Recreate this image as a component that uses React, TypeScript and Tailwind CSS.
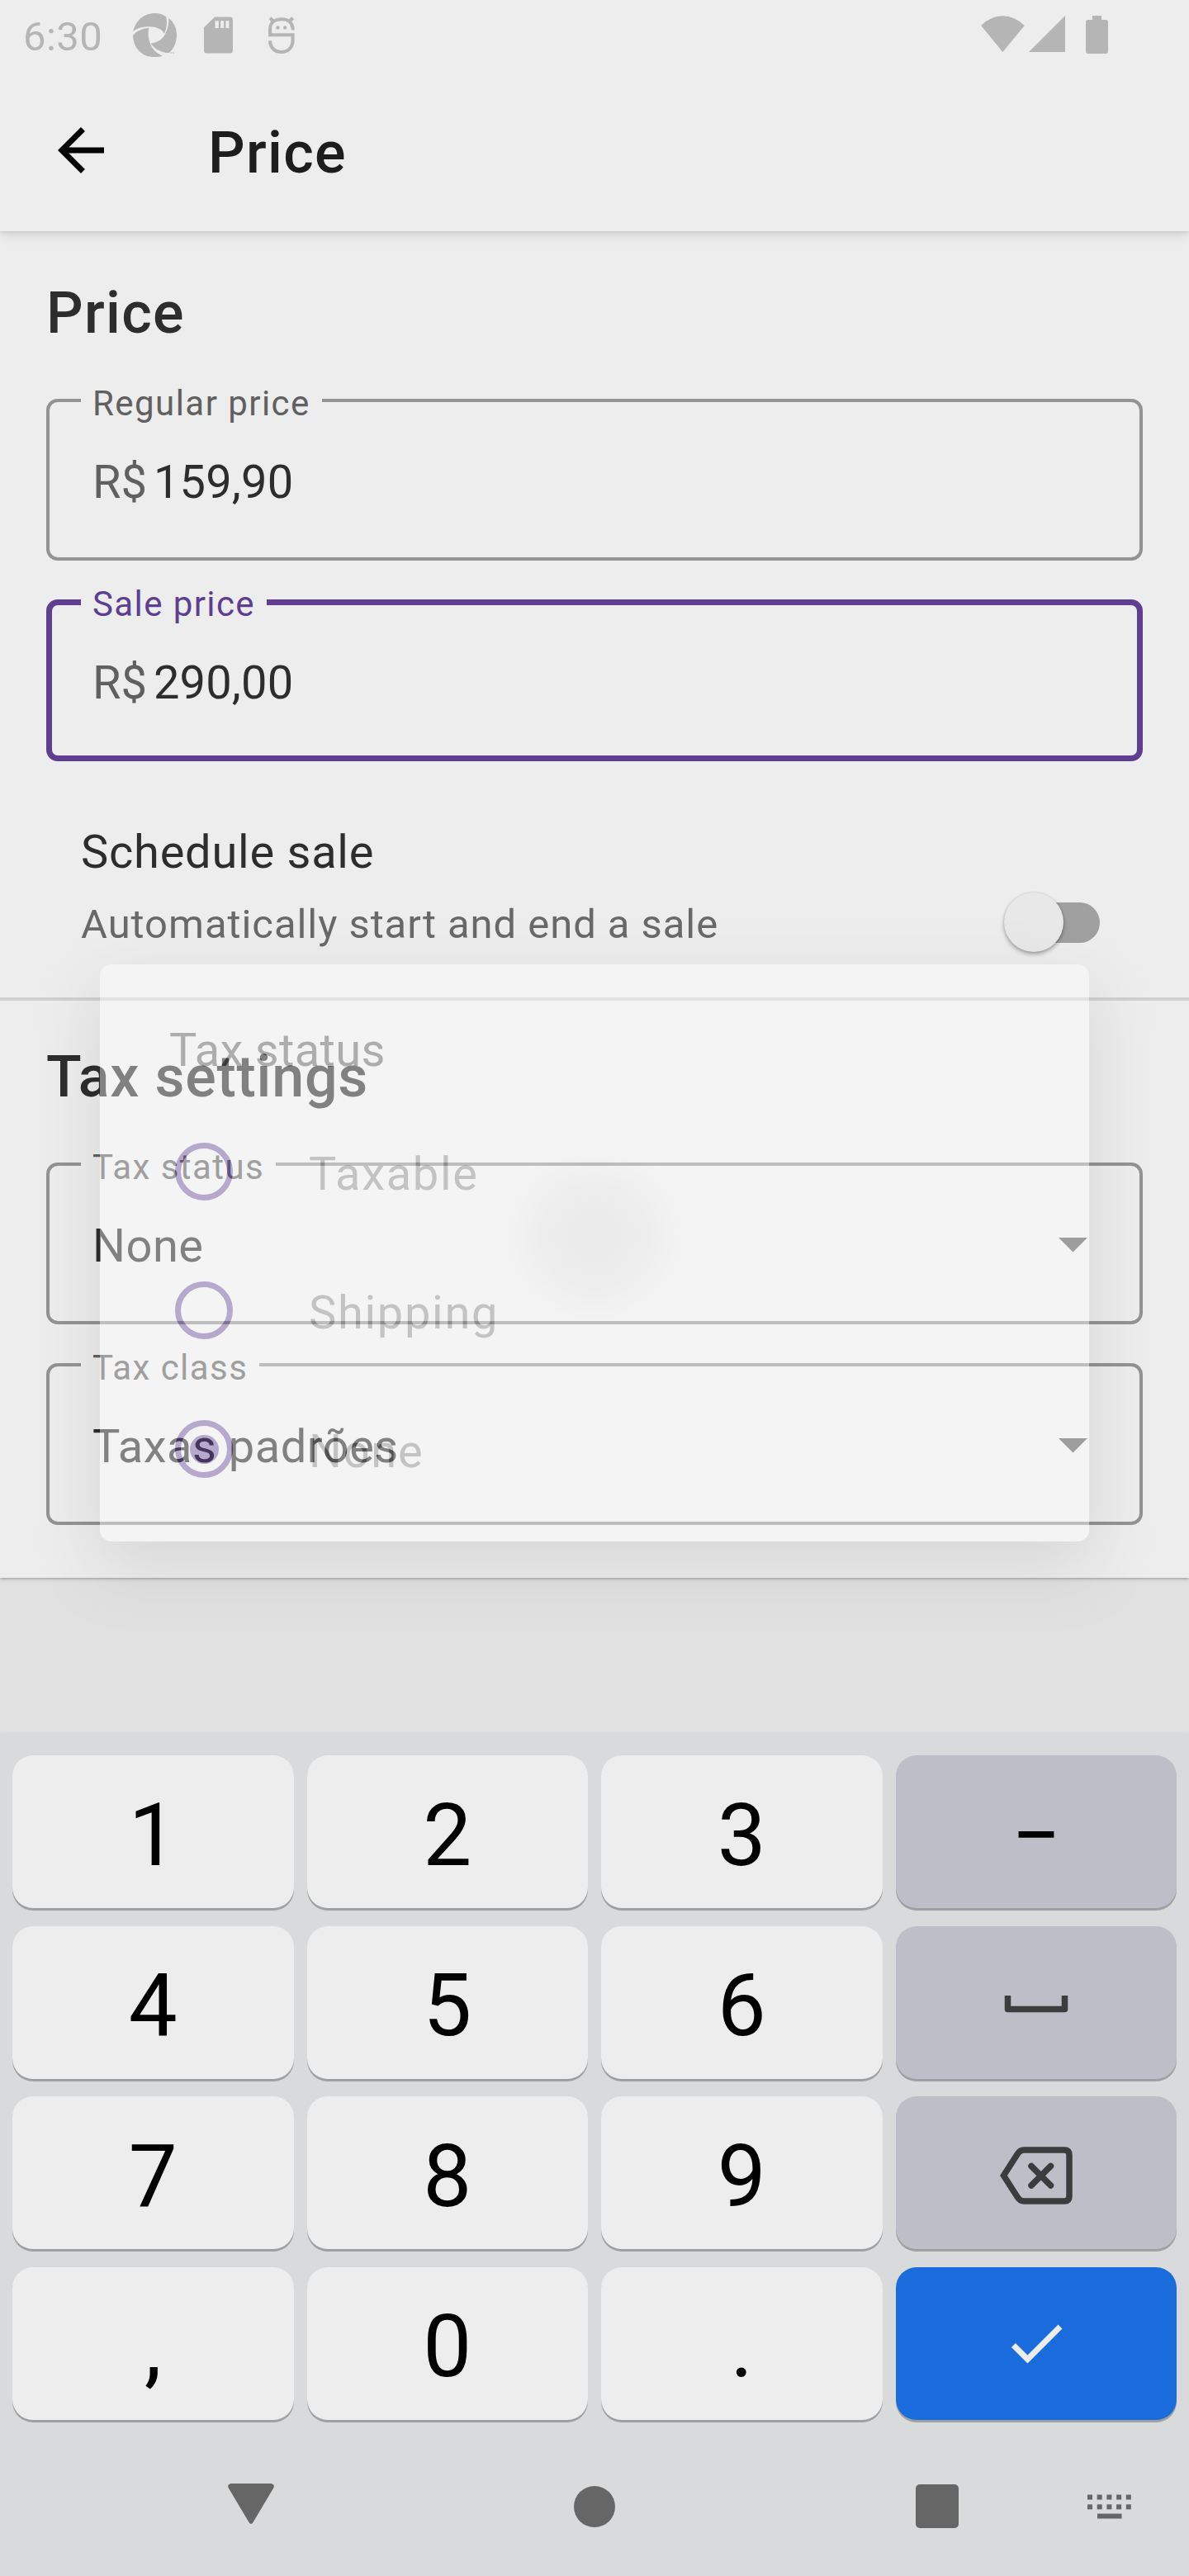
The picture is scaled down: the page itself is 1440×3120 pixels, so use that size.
import React from "react";

function StatusBar() {
  return (
    <div className="flex h-[84px] items-start text-[#b5b5b5]">
      <span className="ml-7 w-[133px] text-[49px] leading-[89px] tracking-[0.4px]">6:30</span>
      <svg className="mt-4 h-[53px] w-[53px]" viewBox="33 24 159 159" fill="currentColor">
        <path d="M34 90C42 50 75 24 112 24c18 0 33 6 42 14c4 20 2 40-7 60C138 82 118 73 92 73C72 73 48 78 34 90Z" />
        <path d="M33 106C45 88 65 80 91 77C86 98 90 118 95 133C102 153 118 170 140 179C122 185 100 184 85 180C55 170 34 142 33 106Z" />
        <path d="M163 42C183 58 192 80 192 105C191 135 178 158 164 168C138 168 112 155 98 134C125 130 142 118 150 100C160 80 164 62 163 42Z" />
        <path d="M170 166h5v4h-5zM177 166h6v4h-6z" opacity=".6" />
      </svg>
      <svg className="mt-5 ml-[33px] h-[45px] w-[35px]" viewBox="290 36 106 134" fill="currentColor">
        <path
          fillRule="evenodd"
          d="M330 36H385a11 11 0 0 1 11 11V159a11 11 0 0 1-11 11H301a11 11 0 0 1-11-11V75ZM331 51V77H344V51ZM351 51V77H363V51ZM370 51V77H382V51Z"
        />
      </svg>
      <svg className="mt-5 ml-[43px] h-[45px] w-8" viewBox="527 36 95 134" fill="none" stroke="currentColor" strokeWidth="12">
        <path d="M621 79H615C613 57 597 46 574 46S533 58 533 82V102H615V120C615 148 598 164 574 164S533 148 533 123" />
        <path d="M533 41l12 12M615 41l-12 12" strokeWidth="13" />
        <circle cx="561" cy="76" r="6.500" fill="currentColor" stroke="none" />
        <circle cx="587" cy="76" r="6.500" fill="currentColor" stroke="none" />
      </svg>
      <div className="mt-[19px] mr-[98px] ml-auto flex items-start">
        <svg className="h-[44px] w-[53px]" viewBox="264 57 159 133" fill="currentColor">
          <path d="M264 93Q300 58 343 58T423 93L343 190Z" />
        </svg>
        <svg className="ml-[5px] h-[44px] w-[44px]" viewBox="0 0 44 44" fill="currentColor">
          <path d="M44 0V44H0Z" />
        </svg>
        <svg className="ml-[25px] h-[46px] w-[27px]" viewBox="0 0 27 46" fill="currentColor">
          <path d="M8 0H19V5H24a3 3 0 0 1 3 3V43a3 3 0 0 1-3 3H3a3 3 0 0 1-3-3V8a3 3 0 0 1 3-3H8Z" />
        </svg>
      </div>
    </div>
  );
}

function Toolbar() {
  return (
    <div className="flex h-[196px] items-center">
      <svg className="ml-14 h-[84px] w-[84px]" viewBox="0 0 24 24" fill="#000">
        <path d="M20 11H7.83l5.59-5.59L12 4l-8 8 8 8 1.41-1.41L7.83 13H20v-2z" />
      </svg>
      <h1 className="ml-28 pt-[6px] text-[70px] leading-none font-medium tracking-[1.3px] text-[#1d1d1d]">Price</h1>
    </div>
  );
}

function OutlinedField({
  label,
  focused,
  prefix,
  children,
}: {
  label: string;
  focused?: boolean;
  prefix?: string;
  children: React.ReactNode;
}) {
  return (
    <div
      className={
        focused
          ? "relative mx-14 flex h-[196px] items-center rounded-[14px] px-14 pt-[6px] shadow-[inset_0_0_0_7px_#5e3e90]"
          : "relative mx-14 flex h-[196px] items-center rounded-[14px] px-14 pt-[6px] shadow-[inset_0_0_0_4px_#939393]"
      }
    >
      <span
        className={
          focused
            ? "absolute -top-[15px] left-[42px] bg-[#ededed] px-[14px] text-[42px] leading-[42px] tracking-[1.4px] text-[#5e3e90]"
            : "absolute -top-[15px] left-[42px] bg-[#ededed] px-[14px] text-[42px] leading-[42px] tracking-[1.45px] text-[#606060]"
        }
      >
        {label}
      </span>
      {prefix && <span className="mr-2 text-[56px] leading-none text-[#606060]">{prefix}</span>}
      {children}
    </div>
  );
}

function Select({ label, value }: { label: string; value: string }) {
  return (
    <OutlinedField label={label}>
      <span className="text-[56px] leading-none tracking-[0.5px] text-[#2d2d2d]">{value}</span>
      <svg className="mr-[11px] -mt-[2px] ml-auto h-[18px] w-[35px]" viewBox="0 0 35 18" fill="#5d5d5d">
        <path d="M0 0H35L17.5 17.5Z" />
      </svg>
    </OutlinedField>
  );
}

const options = [
  { name: "Taxable", on: false },
  { name: "Shipping", on: false },
  { name: "None", on: true },
];

function TaxDialog() {
  return (
    <div className="absolute top-[1168px] left-[121px] h-[699px] w-[1198px] rounded-[14px] bg-white opacity-40 shadow-[0_30px_80px_rgba(0,0,0,0.24)]">
      <div className="absolute top-[218px] left-[484px] h-[222px] w-[230px] rounded-full bg-[radial-gradient(closest-side,rgba(0,0,0,0.09)_0%,rgba(0,0,0,0.08)_40%,transparent_100%)]" />
      <div className="relative">
        <h2 className="ml-[84px] h-[167px] text-[56px] leading-[208px] tracking-[0.35px] text-[#4e4e4e]">Tax status</h2>
        {options.map((o) => (
          <div key={o.name} className="flex h-[168px] items-center pl-[91px]">
            <div className="flex h-[70px] w-[70px] items-center justify-center rounded-full border-[7px] border-[#65449e]">
              {o.on && <div className="h-[35px] w-[35px] rounded-full bg-[#65449e]" />}
            </div>
            <span className="ml-[92px] pt-[6px] text-[56px] leading-none tracking-[1.7px] text-[#858585]">{o.name}</span>
          </div>
        ))}
      </div>
    </div>
  );
}

function Digit({ children }: { children: string }) {
  return (
    <div className="flex items-center justify-center rounded-[25px] bg-[#ededed] pt-[9px] text-[105px] leading-none text-black shadow-[0_3px_0_#9fa0a1]">
      {children}
    </div>
  );
}

const fnKey =
  "flex items-center justify-center rounded-[25px] bg-[#bdbec7] text-[105px] leading-none text-black shadow-[0_3px_0_#9fa0a1]";

function Keyboard() {
  return (
    <div className="relative h-[1020px] bg-[#d9dadc] pt-[26px] shadow-[0_-1px_3px_rgba(0,0,0,0.05)]">
      <div className="grid auto-rows-[185px] grid-cols-4 gap-x-4 gap-y-[21.5px] px-[15px]">
        <Digit>1</Digit>
        <Digit>2</Digit>
        <Digit>3</Digit>
        <div className={fnKey}>
          <span className="pt-[9px]">−</span>
        </div>
        <Digit>4</Digit>
        <Digit>5</Digit>
        <Digit>6</Digit>
        <div className={fnKey}>
          <svg className="mt-[4px] h-[22px] w-[78px]" viewBox="0 0 78 22" fill="none" stroke="#3b3c3d" strokeWidth="7.5" strokeLinejoin="round">
            <path d="M4.5 1V17.5H73.5V1" />
          </svg>
        </div>
        <Digit>7</Digit>
        <Digit>8</Digit>
        <Digit>9</Digit>
        <div className={fnKey}>
          <svg className="mt-[6px] h-[70px] w-[88px]" viewBox="0 0 88 70" fill="none" stroke="#3b3c3d" strokeWidth="7.5">
            <path d="M4.500 35L21.500 8.500Q24.500 4 29 4H78Q84 4 84 10V60Q84 66 78 66H29Q24.500 66 21.500 61.500Z" />
            <path d="M38 23.500L61.500 47M61.500 23.500L38 47" strokeLinecap="round" />
          </svg>
        </div>
        <Digit>,</Digit>
        <Digit>0</Digit>
        <Digit>.</Digit>
        <div className="flex items-center justify-center rounded-[25px] bg-[#1a6bdb] shadow-[0_3px_0_#9fa0a1]">
          <svg className="h-[84px] w-[84px]" viewBox="0 0 24 24" fill="#ececec">
            <path d="M9 16.17L4.83 12l-1.42 1.41L9 19 21 7l-1.41-1.41z" />
          </svg>
        </div>
      </div>
      <div className="flex items-start pt-[77px] pl-[276px] text-[#666]">
        <svg className="h-[54px] w-14" viewBox="0 0 56 54" fill="currentColor">
          <path d="M4 0H52Q57 1 55.500 5L30.500 47Q28 51 25.500 47L.5 5Q-1 1 4 0Z" />
        </svg>
        <svg className="ml-[363px] h-[54px] w-[50px]" viewBox="0 0 50 54" fill="currentColor">
          <circle cx="25" cy="28" r="25" />
        </svg>
        <svg className="ml-[364px] h-[54px] w-[52px]" viewBox="0 0 52 54" fill="currentColor">
          <rect y="1" width="52" height="53" rx="5" />
        </svg>
        <svg className="ml-[156px] h-[54px] w-[54px]" viewBox="0 0 54 54" fill="currentColor">
          {[0, 1, 2, 3, 4].map((i) => (
            <g key={i}>
              <rect x={i * 11.7} y="13.500" width="6" height="6" />
              <rect x={i * 11.7} y="25.300" width="6" height="6" />
            </g>
          ))}
          <rect x="12" y="36.500" width="29.500" height="6" />
        </svg>
      </div>
    </div>
  );
}

export default function App() {
  return (
    <div className="relative h-[3120px] w-[1440px] overflow-hidden bg-[#e1e1e1] font-['Roboto',sans-serif]">
      <header className="relative z-10 bg-[#ededed] shadow-[0_7px_14px_rgba(0,0,0,0.08),0_1px_5px_rgba(0,0,0,0.12)]">
        <StatusBar />
        <Toolbar />
      </header>

      <main className="h-[1820px]">
        <section className="h-[1631px] bg-[#ededed] shadow-[0_1px_4px_rgba(0,0,0,0.35)]">
          <h2 className="h-[203px] pl-14 text-[70px] leading-[198px] font-medium tracking-[1.3px] text-[#2d2d2d]">Price</h2>
          <OutlinedField label="Regular price" prefix="R$">
            <span className="text-[56px] leading-none tracking-[0.15px] text-[#2d2d2d]">159,90</span>
          </OutlinedField>
          <div className="h-[47px]" />
          <OutlinedField label="Sale price" prefix="R$" focused>
            <span className="text-[56px] leading-none tracking-[0.15px] text-[#2d2d2d]">290,00</span>
          </OutlinedField>

          <div className="mt-[72px] pr-[108px] pl-[98px]">
            <div className="h-[77px] text-[56px] leading-[77px] tracking-[0.75px] text-[#2d2d2d]">Schedule sale</div>
            <div className="flex h-24 items-center justify-between">
              <span className="text-[49px] leading-none tracking-[0.94px] text-[#696969]">Automatically start and end a sale</span>
              <div className="-mt-1 flex h-[49px] w-[95px] items-center rounded-full bg-[#a0a0a0]">
                <div className="-ml-[21px] h-[72px] w-[72px] shrink-0 rounded-full bg-[#e8e8e8] shadow-[0_3px_5px_rgba(0,0,0,0.3),0_0_3px_rgba(0,0,0,0.12)]" />
              </div>
            </div>
          </div>
          <div className="mt-[41px] h-1 bg-[#d0d0d0]" />

          <h2 className="h-[196px] pl-14 text-[70px] leading-[184px] font-medium tracking-[0.75px] text-[#2d2d2d]">Tax settings</h2>
          <Select label="Tax status" value="None" />
          <div className="h-[47px]" />
          <Select label="Tax class" value="Taxas padrões" />
        </section>
      </main>

      <Keyboard />
      <TaxDialog />
    </div>
  );
}
